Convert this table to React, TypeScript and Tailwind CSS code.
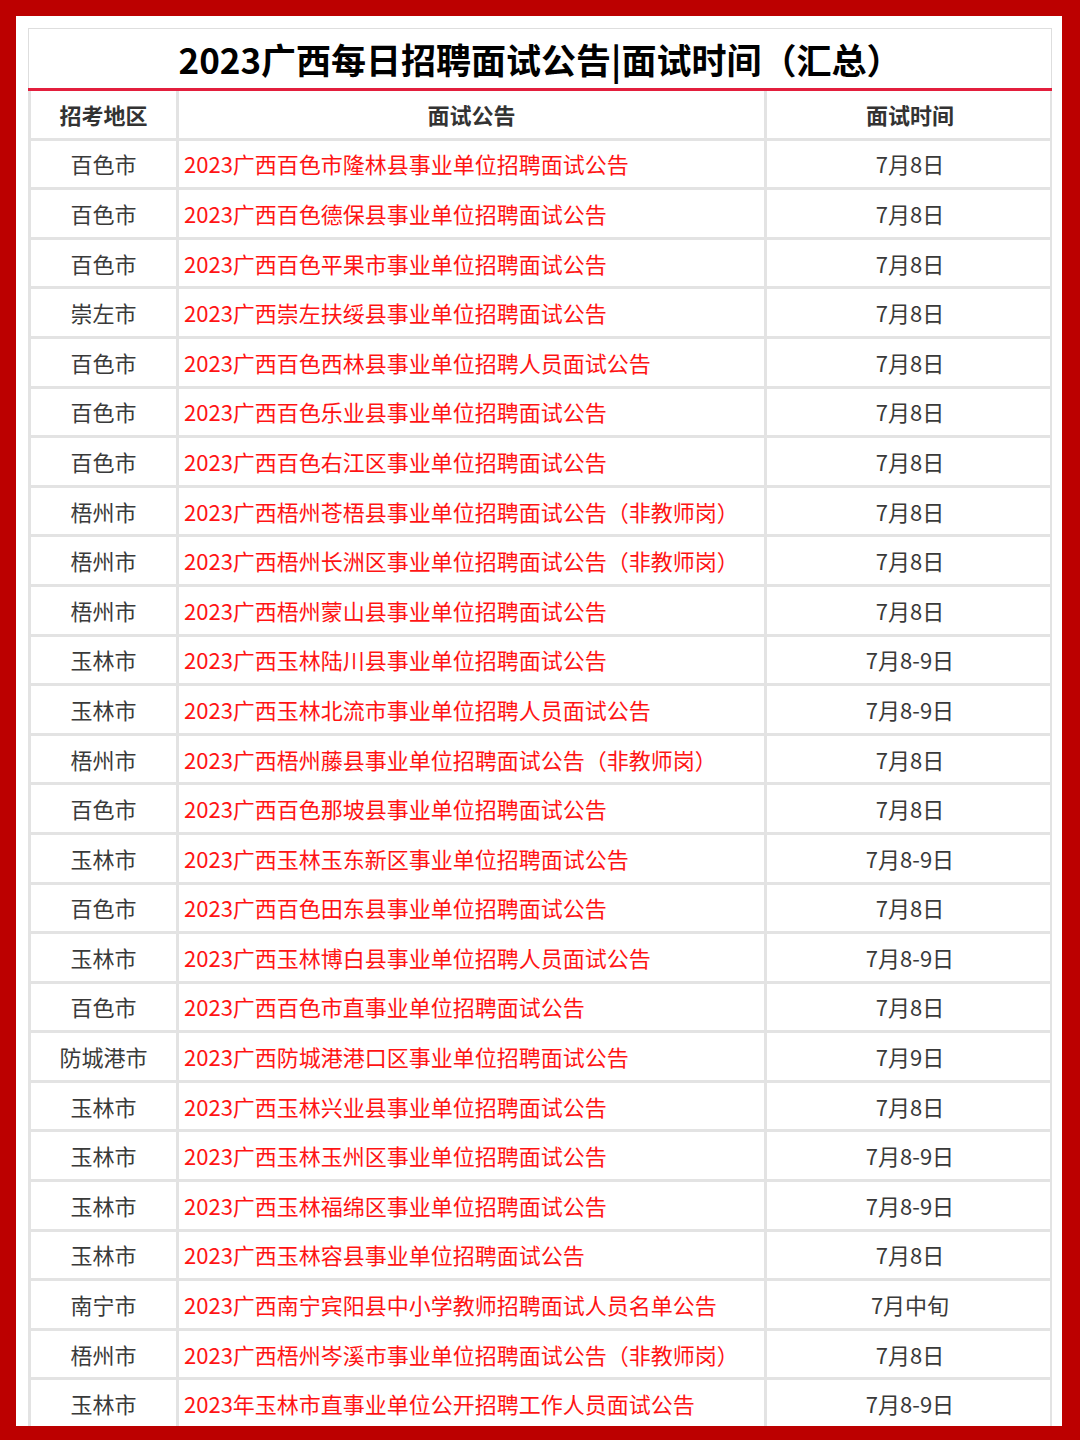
import React from "react";

const rows: [string, string, string][] = [
  ["百色市", "2023广西百色市隆林县事业单位招聘面试公告", "7月8日"],
  ["百色市", "2023广西百色德保县事业单位招聘面试公告", "7月8日"],
  ["百色市", "2023广西百色平果市事业单位招聘面试公告", "7月8日"],
  ["崇左市", "2023广西崇左扶绥县事业单位招聘面试公告", "7月8日"],
  ["百色市", "2023广西百色西林县事业单位招聘人员面试公告", "7月8日"],
  ["百色市", "2023广西百色乐业县事业单位招聘面试公告", "7月8日"],
  ["百色市", "2023广西百色右江区事业单位招聘面试公告", "7月8日"],
  ["梧州市", "2023广西梧州苍梧县事业单位招聘面试公告（非教师岗）", "7月8日"],
  ["梧州市", "2023广西梧州长洲区事业单位招聘面试公告（非教师岗）", "7月8日"],
  ["梧州市", "2023广西梧州蒙山县事业单位招聘面试公告", "7月8日"],
  ["玉林市", "2023广西玉林陆川县事业单位招聘面试公告", "7月8-9日"],
  ["玉林市", "2023广西玉林北流市事业单位招聘人员面试公告", "7月8-9日"],
  ["梧州市", "2023广西梧州藤县事业单位招聘面试公告（非教师岗）", "7月8日"],
  ["百色市", "2023广西百色那坡县事业单位招聘面试公告", "7月8日"],
  ["玉林市", "2023广西玉林玉东新区事业单位招聘面试公告", "7月8-9日"],
  ["百色市", "2023广西百色田东县事业单位招聘面试公告", "7月8日"],
  ["玉林市", "2023广西玉林博白县事业单位招聘人员面试公告", "7月8-9日"],
  ["百色市", "2023广西百色市直事业单位招聘面试公告", "7月8日"],
  ["防城港市", "2023广西防城港港口区事业单位招聘面试公告", "7月9日"],
  ["玉林市", "2023广西玉林兴业县事业单位招聘面试公告", "7月8日"],
  ["玉林市", "2023广西玉林玉州区事业单位招聘面试公告", "7月8-9日"],
  ["玉林市", "2023广西玉林福绵区事业单位招聘面试公告", "7月8-9日"],
  ["玉林市", "2023广西玉林容县事业单位招聘面试公告", "7月8日"],
  ["南宁市", "2023广西南宁宾阳县中小学教师招聘面试人员名单公告", "7月中旬"],
  ["梧州市", "2023广西梧州岑溪市事业单位招聘面试公告（非教师岗）", "7月8日"],
  ["玉林市", "2023年玉林市直事业单位公开招聘工作人员面试公告", "7月8-9日"],
];

const font = { fontFamily: '"Noto Sans CJK SC", "Noto Sans", sans-serif' };

export default function App() {
  return (
    <div
      className="h-[1440px] w-[1080px] overflow-hidden bg-[#bc0000] pl-[16px] pr-[18px] pt-[16px] pb-[14px]"
      style={font}
    >
      <div className="h-[1410px] overflow-hidden bg-white pl-[12px] pr-[10px] pt-[12px]">
        <div className="w-[1024px]">
          <div className="flex h-[60px] items-center justify-center border-x border-t border-[#dedede] text-[35px] font-bold leading-none text-black">
            2023广西每日招聘面试公告|面试时间（汇总）
          </div>
          <div className="h-[3px] bg-[#e31f3d]" />
          <div className="border-l-[3px] border-r-[2px] border-[#e3e3e3]">
            <div className="grid h-[49.6px] grid-cols-[148px_588px_1fr] border-b-[3px] border-[#e3e3e3] text-[22px] font-bold text-[#333]">
              <div className="flex items-center justify-center border-r-[3px] border-[#e3e3e3]">招考地区</div>
              <div className="flex items-center justify-center border-r-[3px] border-[#e3e3e3]">面试公告</div>
              <div className="flex items-center justify-center pl-[3px]">面试时间</div>
            </div>
            {rows.map((r, i) => (
              <div
                key={i}
                className="grid h-[49.6px] grid-cols-[148px_588px_1fr] border-b-[3px] border-[#e3e3e3] text-[22px] leading-none"
              >
                <div className="flex items-center justify-center border-r-[3px] border-[#e3e3e3] pb-[1px] text-[#3a3a3a]">
                  {r[0]}
                </div>
                <div className="flex items-center whitespace-nowrap border-r-[3px] border-[#e3e3e3] pb-[1px] pl-[5px] text-[#ff1414]">
                  {r[1]}
                </div>
                <div className="flex items-center justify-center pb-[1px] pl-[3px] text-[#3a3a3a]">{r[2]}</div>
              </div>
            ))}
          </div>
        </div>
      </div>
    </div>
  );
}
